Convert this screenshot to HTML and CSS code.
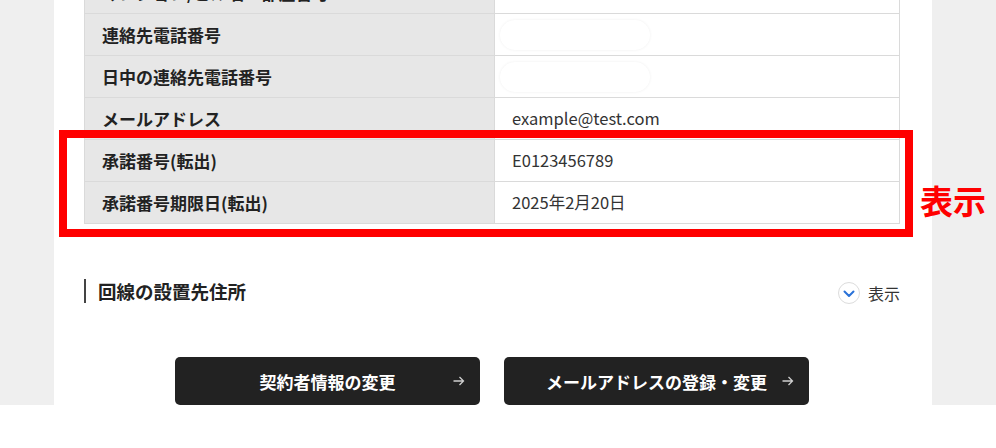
FILE: index.html
```html
<!DOCTYPE html>
<html lang="ja">
<head>
	<meta charset="UTF-8">
	<title>契約者情報</title>
	<link rel="stylesheet" href="styles.css">
</head>
<body>
	<div class="screen">
		<div class="panel">
			<table class="info">
				<tr>
					<th>マンション/ビル名・部屋番号</th>
					<td></td>
				</tr>
				<tr>
					<th>連絡先電話番号</th>
					<td><span class="masked"></span></td>
				</tr>
				<tr>
					<th>日中の連絡先電話番号</th>
					<td><span class="masked"></span></td>
				</tr>
				<tr>
					<th>メールアドレス</th>
					<td>example@test.com</td>
				</tr>
				<tr>
					<th>承諾番号(転出)</th>
					<td>E0123456789</td>
				</tr>
				<tr>
					<th>承諾番号期限日(転出)</th>
					<td>2025年2月20日</td>
				</tr>
			</table>

			<div class="section-head">
				<h3>回線の設置先住所</h3>
				<div class="toggle">
					<span class="toggle-icon">
						<svg width="12" height="8" viewBox="0 0 12 8"><path d="M1.5 1.5 6 6l4.5-4.5" fill="none" stroke="#2a72d8" stroke-width="2" stroke-linecap="round" stroke-linejoin="round"/></svg>
					</span>
					<span>表示</span>
				</div>
			</div>

			<div class="actions">
				<a class="btn"><span class="btn-text">契約者情報の変更</span><span class="btn-arrow"><svg width="12" height="10" viewBox="0 0 12 10"><path d="M0.5 5h10M6.5 1l4 4-4 4" fill="none" stroke="#cfcfcf" stroke-width="1.3"/></svg></span></a>
				<a class="btn"><span class="btn-text">メールアドレスの登録・変更</span><span class="btn-arrow"><svg width="12" height="10" viewBox="0 0 12 10"><path d="M0.5 5h10M6.5 1l4 4-4 4" fill="none" stroke="#cfcfcf" stroke-width="1.3"/></svg></span></a>
			</div>
		</div>

		<!-- 注釈 -->
		<div class="note-box"></div>
		<div class="note-label">表示</div>
	</div>
</body>
</html>
```

FILE: styles.css
```css
body{
	margin: 0;
	background-color: #fff;
	font-family: "Noto Sans CJK JP", "Noto Sans", sans-serif;
	color: #222;
}
.screen{
	height: 405px;
	overflow: hidden;
	background-color: #efefef;
	position: relative;
}
.panel{
	display: flow-root;
	margin: 0 64px 0 54px;
	height: 100%;
	background-color: #fff;
	padding: 0 32px 0 30px;
	box-sizing: border-box;
}
.info{
	width: 100%;
	margin-top: -29px;
	border-collapse: collapse;
	font-size: 17px;
}
.info th,
.info td{
	height: 41px;
	padding: 0 17px;
	border: 1px solid #dadada;
	text-align: left;
	vertical-align: middle;
	line-height: 1;
}
.info th{
	width: 375px;
	background-color: #e7e7e7;
	font-weight: 700;
	color: #222;
}
.info td{
	color: #333;
	font-size: 16.5px;
}
.masked{
	display: block;
	width: 150px;
	height: 30px;
	border-radius: 15px;
	background-color: #fff;
	box-shadow: 0 0 3px #efefef;
	margin-left: -12px;
}
.section-head{
	display: flex;
	justify-content: space-between;
	align-items: center;
	margin-top: 53px;
}
.section-head h3{
	margin: 0;
	padding-left: 12px;
	border-left: 2px solid #444;
	font-size: 18.5px;
	line-height: 24px;
	font-weight: 700;
	color: #222;
}
.toggle{
	display: flex;
	align-items: center;
	gap: 8px;
	font-size: 16px;
	color: #333;
	margin-top: 4px;
}
.toggle-icon{
	width: 22px;
	height: 22px;
	border: 1px solid #dcdcdc;
	border-radius: 50%;
	display: flex;
	align-items: center;
	justify-content: center;
	box-sizing: border-box;
	padding-top: 1px;
}
.actions{
	display: flex;
	justify-content: center;
	gap: 24px;
	margin-top: 52px;
}
.btn{
	width: 305px;
	height: 48px;
	background-color: #222;
	border-radius: 5px;
	display: grid;
	grid-template-columns: 1fr auto 1fr;
	align-items: center;
	color: #fff;
	font-size: 17px;
	font-weight: 700;
	cursor: pointer;
}
.btn-text{
	grid-column: 2;
}
.btn-arrow{
	grid-column: 3;
	justify-self: end;
	margin-right: 15px;
	display: flex;
}
.note-box{
	position: absolute;
	left: 59px;
	top: 130px;
	width: 854px;
	height: 107px;
	border: 8px solid #ff0000;
	box-sizing: border-box;
}
.note-label{
	position: absolute;
	left: 920px;
	top: 180px;
	font-size: 33px;
	font-weight: 700;
	line-height: 40px;
	color: #ff0000;
}
```
